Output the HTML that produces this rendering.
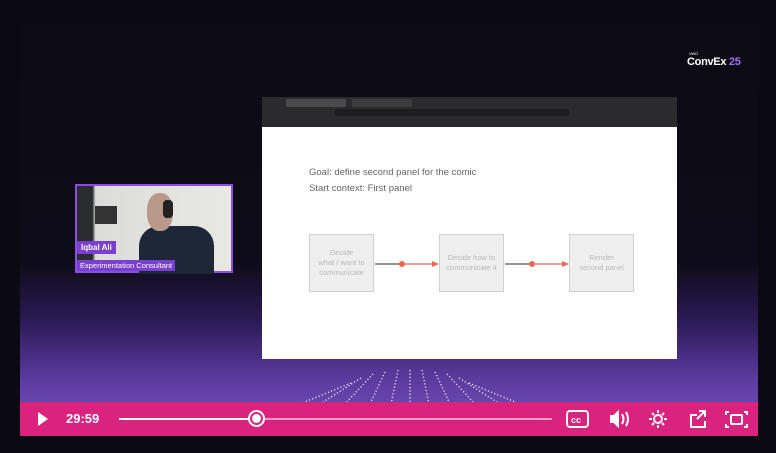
<!DOCTYPE html>
<html><head><meta charset="utf-8"><style>
*{margin:0;padding:0;box-sizing:border-box}
body{width:776px;height:453px;background:#0b0a12;position:relative;overflow:hidden;font-family:"Liberation Sans",sans-serif}
#vid{position:absolute;left:20px;top:22px;width:738px;height:414px;background:linear-gradient(180deg,#0c0b14 0%,#0e0c18 58%,#2a1a55 72%,#5b3a9e 86%,#7a55c0 100%);overflow:hidden}
#dome{position:absolute;left:265px;top:348px;width:250px;height:34px}
#logo{position:absolute;left:687px;top:56px;color:#fff;font-weight:bold;font-size:11px;letter-spacing:-.3px}
#logo small{position:absolute;left:2px;top:-5px;font-size:4px;font-weight:normal}
#slide{position:absolute;left:262px;top:97px;width:415px;height:262px;background:#fff}
#chrome{height:30px;background:#2b2b2e}
.tab{position:absolute;top:2px;height:8px;background:#3c3c40;border-radius:2px}
#url{position:absolute;left:72px;top:12px;width:236px;height:7px;background:#1d1d20;border-radius:4px}
.t{position:absolute;color:#666;font-size:9.5px}
.box{position:absolute;top:137px;width:65px;height:58px;background:#efefef;border:1.5px solid #d0d0d0;color:#b8b8b8;font-size:7.5px;text-align:center;display:flex;align-items:center;justify-content:center;line-height:1.3}
#cam{position:absolute;left:75px;top:184px;width:158px;height:89px;border:2px solid #8a4fe0;background:linear-gradient(90deg,#2a2c30 0,#2a2c30 10%,#dcdcd8 12%,#e8e8e4 100%)}
#bar{position:absolute;left:20px;top:402px;width:738px;height:34px;background:#d9237f}
</style></head><body>
<div id="vid">
<svg id="dome" viewBox="0 0 250 34"><g stroke="#fff" stroke-width="1.4" stroke-dasharray="1.2 2.2" fill="none" opacity=".85">
<path d="M125 0 L125 34"/><path d="M113 0 L106 34"/><path d="M137 0 L144 34"/><path d="M100 2 L85 34"/><path d="M150 2 L165 34"/><path d="M88 4 L60 34"/><path d="M162 4 L190 34"/><path d="M76 8 L35 34"/><path d="M174 8 L215 34"/><path d="M66 13 L15 34"/><path d="M184 13 L235 34"/></g></svg>
</div>
<div id="logo"><small>VWO</small>ConvEx <span style="color:#a070f0">25</span></div>
<div id="slide">
<div id="chrome" style="position:relative">
<div class="tab" style="left:24px;width:60px;background:#4a4a4e"></div><div class="tab" style="left:90px;width:60px"></div>
<div id="url"></div>
</div>
<div class="t" style="left:47px;top:70px">Goal: define second panel for the comic</div>
<div class="t" style="left:47px;top:86px">Start context: First panel</div>
<div class="box" style="left:47px">Decide<br>what I want to<br>communicate</div>
<div class="box" style="left:177px">Decide how to<br>communicate it</div>
<div class="box" style="left:307px">Render<br>second panel</div>
<svg style="position:absolute;left:0;top:160px" width="415" height="14">
<line x1="113" y1="7" x2="140" y2="7" stroke="#555" stroke-width="1.2"/><line x1="140" y1="7" x2="170" y2="7" stroke="#e8685a" stroke-width="1.2"/><circle cx="140" cy="7" r="3" fill="#e8685a"/><path d="M170 4 L177 7 L170 10z" fill="#e8685a"/>
<line x1="243" y1="7" x2="270" y2="7" stroke="#555" stroke-width="1.2"/><line x1="270" y1="7" x2="300" y2="7" stroke="#e8685a" stroke-width="1.2"/><circle cx="270" cy="7" r="3" fill="#e8685a"/><path d="M300 4 L307 7 L300 10z" fill="#e8685a"/></svg>
</div>
<div id="cam">
<div style="position:absolute;left:18px;top:20px;width:22px;height:18px;background:#333"></div>
<div style="position:absolute;left:62px;top:40px;width:75px;height:48px;background:#1e2738;border-radius:20px 20px 0 0"></div>
<div style="position:absolute;left:70px;top:7px;width:26px;height:38px;background:#b8998a;border-radius:45%"></div>
<div style="position:absolute;left:86px;top:14px;width:10px;height:18px;background:#222;border-radius:4px"></div>
<div style="position:absolute;left:0;top:55px;background:#7a3fd0;color:#fff;font-weight:bold;font-size:8px;padding:2px 4px">Iqbal Ali</div>
<div style="position:absolute;left:0;top:74px;background:#7a3fd0;color:#fff;font-size:7.5px;padding:1px 3px">Experimentation Consultant</div>
</div>
<div id="bar">
<svg style="position:absolute;left:18px;top:10px" width="10" height="14"><path d="M0 0 L10 7 L0 14z" fill="#fff"/></svg>
<div style="position:absolute;left:46px;top:9px;color:#fff;font-size:13px;font-weight:bold">29:59</div>
<div style="position:absolute;left:99px;top:16px;width:138px;height:2px;background:#fff"></div>
<div style="position:absolute;left:237px;top:16px;width:295px;height:2px;background:#f3a0c8"></div>
<div style="position:absolute;left:228px;top:8px;width:17px;height:17px;border-radius:50%;border:2px solid #fff;background:#d9237f"><div style="margin:2px;width:9px;height:9px;border-radius:50%;background:#fff"></div></div>
<svg style="position:absolute;left:545px;top:5px" width="190" height="24" fill="none" stroke="#fff" stroke-width="2">
<rect x="2" y="4" width="21" height="16" rx="3"/><text x="6" y="16" fill="#fff" stroke="none" font-size="9" font-weight="bold" font-family="Liberation Sans">cc</text>
<path d="M46 9 h3 l4 -4 v14 l-4 -4 h-3z" fill="#fff"/><path d="M57 7 q3 5 0 10 M61 5 q4 7 0 14"/>
<circle cx="93" cy="12" r="4"/><path d="M93 3v3M93 18v3M84 12h3M99 12h3M87 6l2 2M97 16l2 2M87 18l2-2M97 8l2-2"/>
<path d="M132 8 h-6 v12 h14 v-6 M134 4 h6 v6 M140 4 l-8 8"/>
<path d="M164 5 h-3 v3 M179 5 h3 v3 M164 20 h-3 v-3 M179 20 h3 v-3"/><rect x="166" y="8" width="11" height="9" rx="1"/>
</svg>
</div>
</body></html>
